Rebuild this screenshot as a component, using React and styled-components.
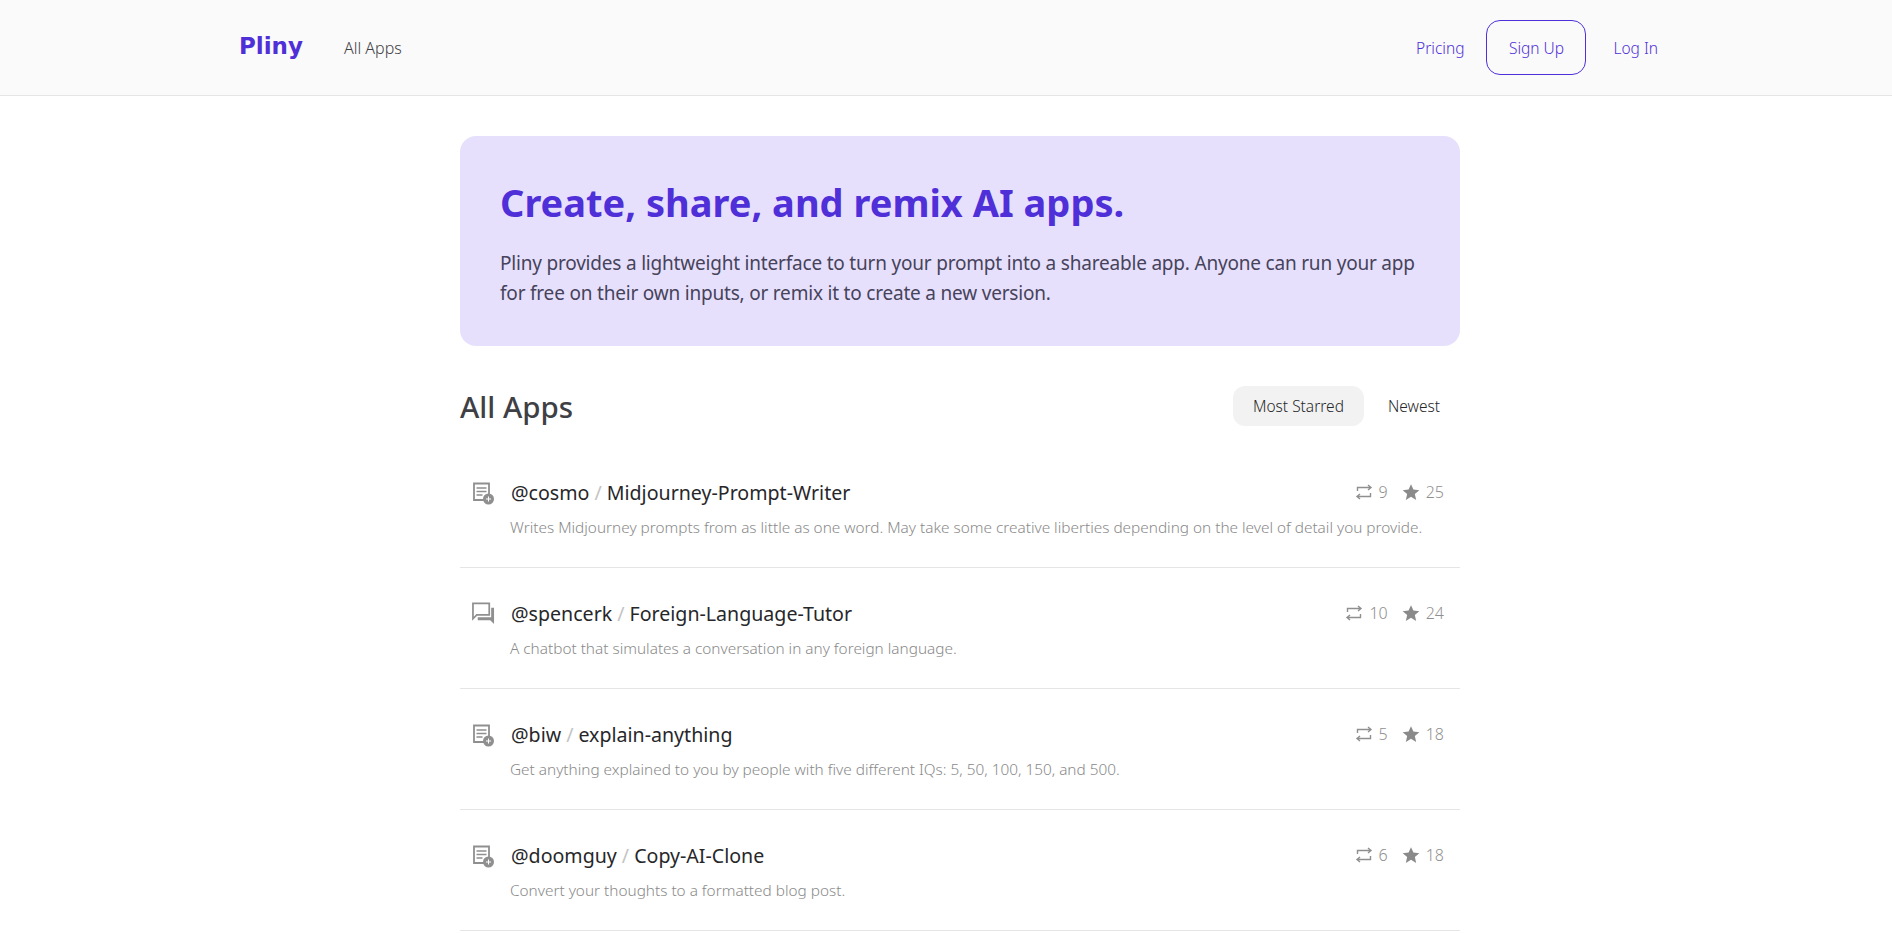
import React from 'react'
import styled, { createGlobalStyle } from 'styled-components'

const GlobalStyle = createGlobalStyle`
  html, body {
    margin: 0;
    padding: 0;
    height: 934px;
    overflow: hidden;
    background: #fff;
    font-family: "Noto Sans", sans-serif;
    font-weight: 300;
    color: #3f3f46;
  }
  * { box-sizing: border-box; }
`

const Nav = styled.header`
  height: 96px;
  background: #fafafa;
  border-bottom: 1px solid #e5e5e5;
  padding: 0 234px 0 239px;
  display: flex;
  align-items: center;
`

const Logo = styled.a`
  font-family: "DejaVu Sans", sans-serif;
  font-weight: 700;
  font-size: 23px;
  line-height: 28px;
  margin-top: -3px;
  color: #4f2fd8;
  width: 105px;
`

const NavLink = styled.a`
  font-size: ${props => props.accent ? '15.5px' : '16px'};
  color: ${props => props.accent ? '#4f2fd8' : '#3f3f46'};
`

const NavRight = styled.div`
  margin-left: auto;
  display: flex;
  align-items: center;
  gap: 22px;
`

const SignUp = styled.a`
  width: 100px;
  height: 55px;
  border: 1px solid #4f2fd8;
  border-radius: 14px;
  color: #4f2fd8;
  font-size: 15.5px;
  display: flex;
  align-items: center;
  justify-content: center;
  margin-right: 5px;
`

const Main = styled.main`
  width: 1000px;
  margin-left: 460px;
  padding-top: 40px;
`

const Hero = styled.section`
  height: 210px;
  background: #e6e0fd;
  border-radius: 16px;
  padding: 40px 40px;
`

const HeroTitle = styled.h1`
  margin: 0 0 20px;
  font-size: 38px;
  line-height: 52px;
  font-weight: 700;
  color: #4f2fd8;
`

const HeroText = styled.p`
  margin: 0;
  font-size: 19px;
  letter-spacing: -0.2px;
  line-height: 30px;
  font-weight: 400;
  color: #46435a;
`

const ListHead = styled.div`
  margin-top: 40px;
  display: flex;
  align-items: center;
  justify-content: space-between;
`

const ListTitle = styled.h2`
  margin: 0;
  font-size: 29.5px;
  font-weight: 500;
  color: #3f3f46;
`

const Tabs = styled.div`
  display: flex;
  align-items: center;
  gap: 4px;
  margin-top: -2px;
`

const Tab = styled.button`
  height: 40px;
  padding: 0 20px;
  border: 0;
  border-radius: 12px;
  background: ${props => props.active ? '#f2f2f2' : 'transparent'};
  font: 300 15.5px "Noto Sans", sans-serif;
  color: #27272a;
`

const Item = styled.article`
  height: 121px;
  padding: 28px 16px 0 13px;
  border-bottom: 1px solid #e5e5e5;
  display: grid;
  grid-template-columns: 38px 1fr auto;
  grid-template-rows: 36px 34px;
  &:first-of-type { margin-top: 20px; }
`

const KindIcon = styled.div`
  padding-top: 6px;
  margin-left: -1px;
  color: #8f8f8f;
`

const Name = styled.div`
  font-size: 19.6px;
  font-weight: 400;
  line-height: 36px;
  color: #27272a;
`

const Slash = styled.span`
  color: #c4c4c4;
  margin: 0 5px;
`

const Stats = styled.div`
  display: flex;
  align-items: center;
  padding-bottom: 2px;
  font-size: 16px;
  color: #8f8f8f;
`

const Stat = styled.span`
  display: flex;
  align-items: center;
  gap: 6px;
  margin-left: 14px;
`

const Desc = styled.p`
  grid-column: 2 / 4;
  margin: 0 0 0 -1px;
  font-size: 15.35px;
  line-height: 33px;
  color: #8a8a8a;
`

const DocIcon = () => (
  <svg width="24" height="24" viewBox="1.5 0 24 24" fill="none">
    <path d="M15 19H3.500V2.500h15V13" stroke="#8f8f8f" strokeWidth="1.8" />
    <path d="M6 7h10M6 10.500h10M6 14h6" stroke="#8f8f8f" strokeWidth="1.6" />
    <circle cx="18" cy="18" r="5.500" fill="#8f8f8f" />
    <path d="M18 15.500v5M15.500 18h5" stroke="#fff" strokeWidth="1" />
  </svg>
)

const ChatIcon = () => (
  <svg width="23" height="23" viewBox="0 0 24 24" fill="none">
    <path d="M1 1.500h17v12H5l-4 4z" stroke="#8f8f8f" strokeWidth="1.8" strokeLinejoin="miter" />
    <path d="M20 6h3v17l-4-4H6v-3h14z" fill="#8f8f8f" />
  </svg>
)

const RepeatIcon = () => (
  <svg width="18" height="18" viewBox="0 0 18 18" fill="none" stroke="#8f8f8f" strokeWidth="1.4">
    <path d="M2.500 8V4.500h13M13 2l3 2.500L13 7" />
    <path d="M15.500 10v3.500h-13M5 11l-3 2.500L5 16" />
  </svg>
)

const StarIcon = () => (
  <svg width="18" height="18" viewBox="0 0 24 24" fill="#8a8a8a">
    <path d="M12 1.500l3.200 7.300 7.900.7-6 5.200 1.800 7.800L12 18.400l-6.900 4.100 1.800-7.800-6-5.200 7.900-.7z" />
  </svg>
)

const apps = [
  { user: '@cosmo', name: 'Midjourney-Prompt-Writer', kind: 'doc', remixes: 9, stars: 25, desc: 'Writes Midjourney prompts from as little as one word. May take some creative liberties depending on the level of detail you provide.' },
  { user: '@spencerk', name: 'Foreign-Language-Tutor', kind: 'chat', remixes: 10, stars: 24, desc: 'A chatbot that simulates a conversation in any foreign language.' },
  { user: '@biw', name: 'explain-anything', kind: 'doc', remixes: 5, stars: 18, desc: 'Get anything explained to you by people with five different IQs: 5, 50, 100, 150, and 500.' },
  { user: '@doomguy', name: 'Copy-AI-Clone', kind: 'doc', remixes: 6, stars: 18, desc: 'Convert your thoughts to a formatted blog post.' },
]

export default function App() {
  return (
    <>
      <GlobalStyle />
      <Nav>
        <Logo>Pliny</Logo>
        <NavLink>All Apps</NavLink>
        <NavRight>
          <NavLink accent>Pricing</NavLink>
          <SignUp>Sign Up</SignUp>
          <NavLink accent>Log In</NavLink>
        </NavRight>
      </Nav>
      <Main>
        <Hero>
          <HeroTitle>Create, share, and remix AI apps.</HeroTitle>
          <HeroText>
            Pliny provides a lightweight interface to turn your prompt into a shareable app. Anyone can run your app for free on their own inputs, or remix it to create a new version.
          </HeroText>
        </Hero>
        <ListHead>
          <ListTitle>All Apps</ListTitle>
          <Tabs>
            <Tab active>Most Starred</Tab>
            <Tab>Newest</Tab>
          </Tabs>
        </ListHead>
        {apps.map(app => (
          <Item key={app.name}>
            <KindIcon>{app.kind === 'chat' ? <ChatIcon /> : <DocIcon />}</KindIcon>
            <Name>{app.user}<Slash>/</Slash>{app.name}</Name>
            <Stats>
              <Stat><RepeatIcon />{app.remixes}</Stat>
              <Stat><StarIcon />{app.stars}</Stat>
            </Stats>
            <Desc>{app.desc}</Desc>
          </Item>
        ))}
      </Main>
    </>
  )
}
